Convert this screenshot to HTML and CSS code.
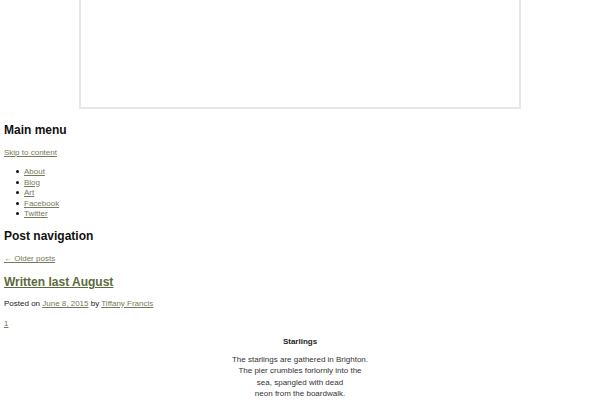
FILE: index.html
```html
<!DOCTYPE html>
<html>
<head>
<meta charset="utf-8">
<link rel="stylesheet" href="styles.css">
</head>
<body>
<div class="frame"></div>
<nav class="menu">
  <h3 class="heading">Main menu</h3>
  <p class="skip"><a href="#">Skip to content</a></p>
  <ul class="links">
    <li><a href="#">About</a></li>
    <li><a href="#">Blog</a></li>
    <li><a href="#">Art</a></li>
    <li><a href="#">Facebook</a></li>
    <li><a href="#">Twitter</a></li>
  </ul>
</nav>
<nav class="postnav">
  <h3 class="heading">Post navigation</h3>
  <p class="older"><a href="#">← Older posts</a></p>
</nav>
<article class="post">
  <h2 class="title"><a href="#">Written last August</a></h2>
  <p class="meta">Posted on <a href="#">June 8, 2015</a> by <a href="#">Tiffany Francis</a></p>
  <p class="num"><a href="#">1</a></p>
  <div class="poem">
    <p class="poem-title">Starlings</p>
    <p class="stanza">The starlings are gathered in Brighton.<br>The pier crumbles forlornly into the<br>sea, spangled with dead<br>neon from the boardwalk.<br>Tourists marvel and hold their</p>
  </div>
</article>
</body>
</html>
```
FILE: styles.css
```css
html, body {
  margin: 0;
  padding: 0;
  background: #fff;
}
body {
  padding: 0 4px;
  font-family: "Liberation Sans", Arial, sans-serif;
  font-size: 8px;
  line-height: 1.3;
  color: #222;
}
a {
  color: #767a5c;
  text-decoration: underline;
}
.frame {
  width: 438px;
  height: 107px;
  margin: 0 auto;
  border: 2px solid #e6e6e6;
  border-top: none;
}
.heading {
  font-size: 12px;
  font-weight: bold;
  margin: 14px 0 0;
  line-height: 14px;
  color: #111;
}
.skip {
  margin: 11px 0 0;
}
.links {
  margin: 9px 0 0;
  padding-left: 20px;
  list-style: none;
}
.links li::before {
  content: "";
  display: inline-block;
  width: 3px;
  height: 3px;
  border-radius: 50%;
  background: #111;
  margin-left: -8px;
  margin-right: 5px;
  vertical-align: 1px;
}
.postnav .heading {
  margin-top: 10px;
}
.older {
  margin: 11px 0 0;
}
.title {
  font-size: 12px;
  font-weight: bold;
  margin: 10px 0 0;
  line-height: 15px;
}
.title a {
  color: #5b6a3c;
}
.meta {
  margin: 9px 0 0;
}
.num {
  margin: 10px 0 0;
}
.poem {
  text-align: center;
  margin-top: 7px;
}
.poem-title {
  font-weight: bold;
  margin: 0;
}
.stanza {
  margin: 7px 0 0;
  line-height: 11.4px;
  color: #333;
}
```
